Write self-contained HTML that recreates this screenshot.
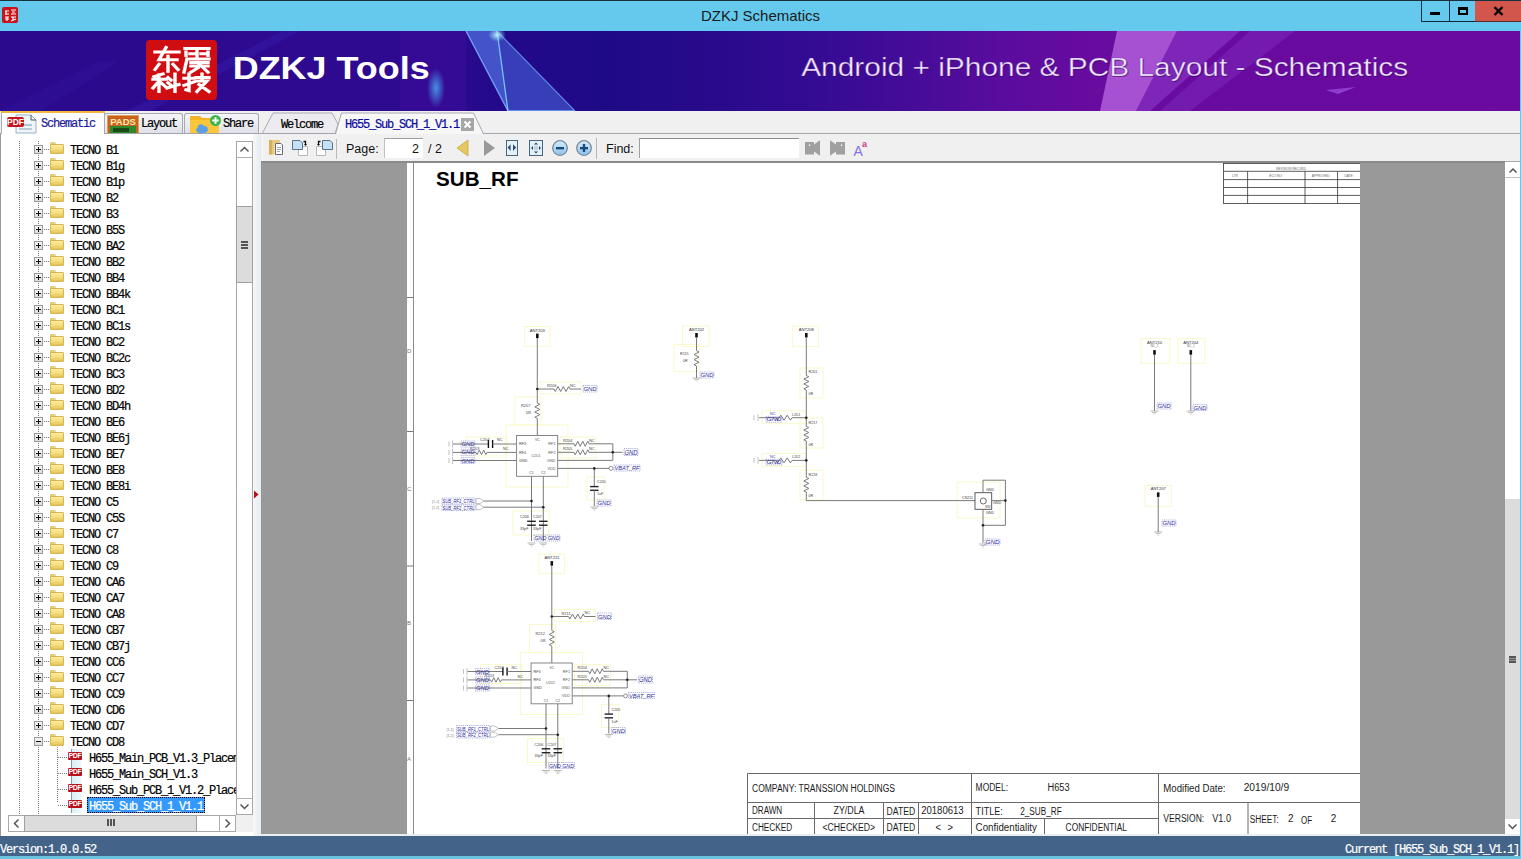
<!DOCTYPE html>
<html><head><meta charset="utf-8"><title>DZKJ Schematics</title>
<style>
*,*::before,*::after{margin:0;padding:0;box-sizing:border-box}
html,body{width:1521px;height:859px;overflow:hidden;background:#f0f0f0;font-family:"Liberation Sans",sans-serif}
.a{position:absolute}
#titlebar{left:0;top:0;width:1521px;height:31px;background:#64c9ec;border-top:1px solid #17323c}
#title{left:0;top:1px;width:1521px;text-align:center;font-size:15px;line-height:29px;color:#1c1c1c}
#banner{left:0;top:31px;width:1520px;height:80px;overflow:hidden;background:linear-gradient(90deg,#2a0a8a 0%,#2d0b8e 30%,#310b92 48%,#3a0c98 55%,#520c9e 66%,#650c9e 76%,#6a0a9c 100%)}
#bright{left:1520px;top:31px;width:1px;height:828px;background:#6cc6e4}
.mono{font-family:"Liberation Mono",monospace;font-size:12px;letter-spacing:-1.2px;white-space:pre;-webkit-text-stroke:0.2px currentColor}
#tabrow{left:0;top:111px;width:1520px;height:23px;background:#f0f0f0}
#leftpanel{left:0;top:134px;width:261px;height:702px;background:#fff;border-left:1px solid #9a9a9a}
#lstrip{left:253px;top:134px;width:8px;height:702px;background:linear-gradient(90deg,#f6f8fa,#e6ecf0)}
#splitter{left:261px;top:161px;width:1px;height:673px;background:#959595}
#toolbar{left:262px;top:134px;width:1258px;height:27px;background:#f0f0f0;border-left:1px solid #fafafa}
#viewer{left:262px;top:161px;width:1243px;height:673px;background:#999999;border-top:2px solid #8a8a8a}
#vbelow{left:262px;top:834px;width:1258px;height:2px;background:#e8eef2}
#status{left:0;top:836px;width:1520px;height:20px;background:#436488}
#bottomedge{left:0;top:856px;width:1521px;height:3px;background:#6cc3e0}
.tx{height:16px;line-height:16px;color:#000}
.sel{background:#3399ff;color:#fff;outline:1px dotted #000;outline-offset:-1px;padding:0 2px 0 2px}
.dv{width:1px;background-image:linear-gradient(180deg,#7a7a7a 50%,transparent 50%);background-size:1px 2px}
.dh{height:1px;background-image:linear-gradient(90deg,#7a7a7a 50%,transparent 50%);background-size:2px 1px}
.bx{width:9px;height:9px;border:1px solid #9a9a9a;background:linear-gradient(#f4f4f4,#dcdcdc)}
.bx::before{content:"";position:absolute;left:1px;top:3px;width:5px;height:1px;background:#111}
.pl::after{content:"";position:absolute;left:3px;top:1px;width:1px;height:5px;background:#111}
.fo{width:14px;height:12px}
.fo::before{content:"";position:absolute;left:0;top:0;width:6px;height:3px;background:#e8cf7c;border-radius:1px 2px 0 0}
.fo::after{content:"";position:absolute;left:0;top:2px;width:14px;height:10px;background:linear-gradient(#fbef9e,#f3da78 60%,#e7c05a);border:1px solid #d7b552;border-radius:1px}
.pdfi{width:16px;height:11px}
.pdfi::before{content:"";position:absolute;left:4px;top:-3px;width:10px;height:16px;background:linear-gradient(90deg,#dceef6,#eaf8fa);border-left:1px solid #8a9aa8}
.pdfi span{position:absolute;left:1px;top:0;width:14px;height:8px;background:#b8101a;border-radius:1px;color:#fff;font:bold 7px/8px "Liberation Sans",sans-serif;text-align:center;letter-spacing:-0.3px}
.sb{border:1px solid #a8a8a8;background:#fff}
.thumb{background:#dcdcdc;border:1px solid #a0a0a0}
.tab{height:22px;border:1px solid #a9a9b4;border-bottom:none;border-radius:3px 3px 0 0;background:linear-gradient(#f6f6f9,#dfdfe8)}
.tbtxt{font-size:12px;color:#1a1a1a}
.ic{position:absolute}
</style></head><body>
<div class="a" id="titlebar"></div>
<div class="a" id="title">DZKJ Schematics</div>
<div class="a" style="left:2px;top:7px;width:16px;height:16px;background:#c8141a;border-radius:2px"></div>
<svg class="a" style="left:2px;top:7px" width="16" height="16" viewBox="0 0 16 16" stroke="#fff" stroke-width="1.2" fill="none"><path d="M3 4H7M4 4V8M3 7H7M9 3H14M10 5H13M9 7H14M3 10H7M5 10V14M3 12H7M9 10H14M11 10V14M9 14L14 12"/></svg>
<div class="a" style="left:1421px;top:1px;width:55px;height:21px;border:1px solid #0f2a36;border-top:none"></div>
<div class="a" style="left:1449px;top:1px;width:1px;height:21px;background:#0f2a36"></div>
<div class="a" style="left:1475px;top:1px;width:46px;height:21px;background:#d2564b;border-bottom:1px solid #5a2a24"></div>
<div class="a" style="left:1430px;top:12px;width:10px;height:3px;background:#000"></div>
<div class="a" style="left:1458px;top:7px;width:10px;height:8px;border:2px solid #000;border-top-width:3px"></div>
<svg class="a" style="left:1493px;top:6px" width="11" height="10" viewBox="0 0 11 10"><path d="M1.5 1 L9.5 9 M9.5 1 L1.5 9" stroke="#000" stroke-width="2.4"/></svg>

<div class="a" id="banner">
<svg class="a" style="left:0;top:0" width="1520" height="80" viewBox="0 0 1520 80" font-family="Liberation Sans">
<defs>
<linearGradient id="bg" x1="0" y1="0" x2="1520" y2="0" gradientUnits="userSpaceOnUse">
<stop offset="0" stop-color="#2b0a8d"/><stop offset="0.29" stop-color="#2e0a90"/><stop offset="0.33" stop-color="#22098a"/>
<stop offset="0.40" stop-color="#1f0a86"/><stop offset="0.46" stop-color="#270a8a"/><stop offset="0.53" stop-color="#330b92"/>
<stop offset="0.60" stop-color="#450c98"/><stop offset="0.66" stop-color="#5a0c9e"/><stop offset="0.72" stop-color="#680b9f"/>
<stop offset="1" stop-color="#6b0a9e"/></linearGradient>
<radialGradient id="glow" cx="0.5" cy="0.5" r="0.5"><stop offset="0" stop-color="#4aa8f0" stop-opacity=".85"/><stop offset="1" stop-color="#4aa8f0" stop-opacity="0"/></radialGradient>
<radialGradient id="glow2" cx="0.5" cy="0.5" r="0.5"><stop offset="0" stop-color="#c8ffff" stop-opacity=".9"/><stop offset="1" stop-color="#80e0ff" stop-opacity="0"/></radialGradient>
</defs>
<rect width="1520" height="80" fill="url(#bg)"/>
<polygon points="127,80 150,80 300,0 282,0" fill="#4a3ad8" opacity=".18"/>
<polygon points="0,80 40,80 120,30 100,30" fill="#4a3ad8" opacity=".08"/>
<rect x="400" y="0" width="66" height="80" fill="#3b0c9a" opacity=".6"/>
<polygon points="466,0 497,0 575,80 508,80" fill="#4a6ae0" opacity=".55"/>
<polygon points="466,0 497,0 508,80" fill="#5a7ae8" opacity=".35"/>
<polyline points="466,0 508,80 575,80" fill="none" stroke="#7ab0ff" stroke-width="1.3" opacity=".9"/>
<polyline points="497,0 508,80" fill="none" stroke="#80d0ff" stroke-width="1.3" opacity=".9"/>
<polyline points="497,0 575,80" fill="none" stroke="#6a9af0" stroke-width="1.2" opacity=".8"/>
<ellipse cx="497" cy="4" rx="9" ry="7" fill="url(#glow2)"/>
<ellipse cx="436" cy="57" rx="9" ry="20" fill="url(#glow)"/>
<polygon points="1117,0 1177,0 1136,80 1100,80" fill="#c878ec" opacity=".65"/>
<polygon points="1177,0 1240,0 1150,80 1136,80" fill="#9a48d8" opacity=".45"/>
<polygon points="1250,0 1295,0 1190,80 1160,80" fill="#8a38cc" opacity=".35"/>
<polygon points="1326,59 1356,56 1338,63" fill="#a050e0" opacity=".7"/>
<rect x="146" y="9" width="71" height="60" rx="4" fill="#d00e12"/>
<g fill="none" stroke="#fff" stroke-width="3.4" stroke-linecap="square" transform="translate(146 9.5) scale(1 0.88)">
<path d="M9 13 H33 M20 8 L13 22 H31 M22 18 V35 M13 27 L9 33 M27 27 L32 33"/>
<path d="M39 9 H63 M40 13 V17 M62 13 V17 M51 9 V19 M44 15 H48 M55 15 H59 M41 21 H63 M41 21 L38 36 M45 25 H62 M45 29 H62 M52 25 L62 36 M52 31 L45 36"/>
<path d="M17 38 L8 41 M7 44 H20 M13 39 V58 M13 46 L7 54 M14 47 L19 52 M22 42 L25 45 M22 48 L25 51 M21 54 L33 50 M29 38 V58"/>
<path d="M38 43 H48 M43 38 V57 L40 56 M38 51 L48 47 M50 42 H63 M56 38 V46 M51 46 H61 L51 58 M53 50 L63 58"/>
</g>
<text x="232.7" y="48.4" font-size="31" font-weight="bold" fill="#fff" textLength="197" lengthAdjust="spacingAndGlyphs">DZKJ Tools</text>
<text x="802.2" y="45.7" font-size="25" fill="#3a0050" opacity=".45" textLength="607" lengthAdjust="spacingAndGlyphs">Android + iPhone &amp; PCB Layout - Schematics</text>
<text x="801.2" y="44.7" font-size="25" fill="#f6eefc" stroke="#5010a0" stroke-opacity=".55" stroke-width=".7" paint-order="normal" textLength="607" lengthAdjust="spacingAndGlyphs">Android + iPhone &amp; PCB Layout - Schematics</text>
</svg>
</div>
<div class="a" id="tabrow"></div>
<div class="a" style="left:0;top:133px;width:1520px;height:1px;background:#a4a4ac"></div>
<div class="a" style="left:1px;top:111px;width:104px;height:24px;background:#fff;border:1px solid #a9a9b4;border-bottom:none"></div>
<div class="a" style="left:1px;top:111px;width:104px;height:2px;background:#f0b840"></div>
<div class="a tab" style="left:104px;top:113px;width:79px;height:21px"></div>
<div class="a tab" style="left:184px;top:113px;width:75px;height:21px"></div>
<svg class="a" style="left:5px;top:114px" width="34" height="20" viewBox="0 0 34 20">
<path d="M11 1 H26 L31 6 V19 H11 Z" fill="#eef6fb" stroke="#9ab0c0" stroke-width="1"/>
<path d="M26 1 V6 H31" fill="none" stroke="#555" stroke-width="1"/>
<rect x="14" y="10" width="13" height="2" fill="#a9c9dc"/><rect x="14" y="14" width="13" height="2" fill="#b9ccd8"/>
<rect x="2" y="3" width="17" height="10" rx="2" fill="#c8141c"/>
<text x="10.5" y="11.3" font-family="Liberation Sans" font-weight="bold" font-size="8.5" fill="#fff" text-anchor="middle">PDF</text>
</svg>
<div class="a mono" style="left:41px;top:117px;color:#1c1c9c;line-height:14px">Schematic</div>
<svg class="a" style="left:107px;top:115px" width="32" height="19" viewBox="0 0 32 19">
<rect x="0.5" y="0.5" width="31" height="18" fill="#c8631c" stroke="#e0a060"/>
<text x="16" y="9.5" font-family="Liberation Sans" font-weight="bold" font-size="9.5" fill="#ffe8b0" text-anchor="middle">PADS</text>
<rect x="3" y="11" width="26" height="8" fill="#2c8a2c"/><rect x="6" y="13" width="16" height="4" fill="#1a4a1a"/>
</svg>
<div class="a mono" style="left:141px;top:117px;color:#000;line-height:14px">Layout</div>
<svg class="a" style="left:189px;top:114px" width="34" height="20" viewBox="0 0 34 20">
<path d="M1 2 H11 L13 4 H30 V20 H1 Z" fill="#f6b526"/>
<path d="M1 6 H30 V20 H1Z" fill="#fcc63a"/>
<ellipse cx="13" cy="16" rx="6" ry="3.5" fill="#5aa0e6"/><circle cx="12" cy="13.5" r="3.2" fill="#5aa0e6"/><circle cx="16" cy="14.5" r="2.5" fill="#5aa0e6"/>
<circle cx="26.5" cy="6.5" r="5.5" fill="#3ab54a"/><path d="M26.5 3.2 V9.8 M23.2 6.5 H29.8" stroke="#fff" stroke-width="2"/>
</svg>
<div class="a mono" style="left:223px;top:117px;color:#000;line-height:14px">Share</div>
<svg class="a" style="left:258px;top:111px" width="240" height="24" viewBox="258 111 240 24">
<path d="M262 134 L273 113 H332 L338 124 L335 134" fill="#ececf0" stroke="#a9a9b4" stroke-width="1"/>
<path d="M335.5 134 L341.5 113 H473.5 L483.5 134" fill="#f7f7f7" stroke="#a9a9b4" stroke-width="1"/>
</svg>
<div class="a" style="left:104px;top:133px;width:232px;height:1px;background:#a4a4ac"></div>
<div class="a" style="left:483px;top:133px;width:1037px;height:1px;background:#a4a4ac"></div>
<div class="a mono" style="left:281px;top:118px;color:#000;line-height:14px">Welcome</div>
<div class="a mono" style="left:345px;top:118px;color:#0a0aa0;line-height:14px">H655_Sub_SCH_1_V1.1</div>
<div class="a" style="left:461px;top:118px;width:13px;height:13px;background:#a6a6a6"></div>
<svg class="a" style="left:461px;top:118px" width="13" height="13" viewBox="0 0 13 13"><path d="M3.5 3.5L9.5 9.5M9.5 3.5L3.5 9.5" stroke="#fff" stroke-width="2"/></svg>
<div class="a" id="leftpanel"></div>
<div class="a" id="treeclip" style="left:1px;top:141px;width:235px;height:673px;overflow:hidden">
<div class="a dv" style="left:18px;top:0px;height:673px"></div>
<div class="a dv" style="left:37px;top:0px;height:673px"></div>
<div class="a dv" style="left:56px;top:606px;height:56px"></div>
<div class="a bx pl" style="left:33px;top:4px"></div>
<div class="a dh" style="left:43px;top:8px;width:6px"></div>
<div class="a fo" style="left:49px;top:1px"></div>
<div class="a mono tx" style="left:69px;top:2px">TECNO B1</div>
<div class="a bx pl" style="left:33px;top:20px"></div>
<div class="a dh" style="left:43px;top:24px;width:6px"></div>
<div class="a fo" style="left:49px;top:17px"></div>
<div class="a mono tx" style="left:69px;top:18px">TECNO B1g</div>
<div class="a bx pl" style="left:33px;top:36px"></div>
<div class="a dh" style="left:43px;top:40px;width:6px"></div>
<div class="a fo" style="left:49px;top:33px"></div>
<div class="a mono tx" style="left:69px;top:34px">TECNO B1p</div>
<div class="a bx pl" style="left:33px;top:52px"></div>
<div class="a dh" style="left:43px;top:56px;width:6px"></div>
<div class="a fo" style="left:49px;top:49px"></div>
<div class="a mono tx" style="left:69px;top:50px">TECNO B2</div>
<div class="a bx pl" style="left:33px;top:68px"></div>
<div class="a dh" style="left:43px;top:72px;width:6px"></div>
<div class="a fo" style="left:49px;top:65px"></div>
<div class="a mono tx" style="left:69px;top:66px">TECNO B3</div>
<div class="a bx pl" style="left:33px;top:84px"></div>
<div class="a dh" style="left:43px;top:88px;width:6px"></div>
<div class="a fo" style="left:49px;top:81px"></div>
<div class="a mono tx" style="left:69px;top:82px">TECNO B5S</div>
<div class="a bx pl" style="left:33px;top:100px"></div>
<div class="a dh" style="left:43px;top:104px;width:6px"></div>
<div class="a fo" style="left:49px;top:97px"></div>
<div class="a mono tx" style="left:69px;top:98px">TECNO BA2</div>
<div class="a bx pl" style="left:33px;top:116px"></div>
<div class="a dh" style="left:43px;top:120px;width:6px"></div>
<div class="a fo" style="left:49px;top:113px"></div>
<div class="a mono tx" style="left:69px;top:114px">TECNO BB2</div>
<div class="a bx pl" style="left:33px;top:132px"></div>
<div class="a dh" style="left:43px;top:136px;width:6px"></div>
<div class="a fo" style="left:49px;top:129px"></div>
<div class="a mono tx" style="left:69px;top:130px">TECNO BB4</div>
<div class="a bx pl" style="left:33px;top:148px"></div>
<div class="a dh" style="left:43px;top:152px;width:6px"></div>
<div class="a fo" style="left:49px;top:145px"></div>
<div class="a mono tx" style="left:69px;top:146px">TECNO BB4k</div>
<div class="a bx pl" style="left:33px;top:164px"></div>
<div class="a dh" style="left:43px;top:168px;width:6px"></div>
<div class="a fo" style="left:49px;top:161px"></div>
<div class="a mono tx" style="left:69px;top:162px">TECNO BC1</div>
<div class="a bx pl" style="left:33px;top:180px"></div>
<div class="a dh" style="left:43px;top:184px;width:6px"></div>
<div class="a fo" style="left:49px;top:177px"></div>
<div class="a mono tx" style="left:69px;top:178px">TECNO BC1s</div>
<div class="a bx pl" style="left:33px;top:196px"></div>
<div class="a dh" style="left:43px;top:200px;width:6px"></div>
<div class="a fo" style="left:49px;top:193px"></div>
<div class="a mono tx" style="left:69px;top:194px">TECNO BC2</div>
<div class="a bx pl" style="left:33px;top:212px"></div>
<div class="a dh" style="left:43px;top:216px;width:6px"></div>
<div class="a fo" style="left:49px;top:209px"></div>
<div class="a mono tx" style="left:69px;top:210px">TECNO BC2c</div>
<div class="a bx pl" style="left:33px;top:228px"></div>
<div class="a dh" style="left:43px;top:232px;width:6px"></div>
<div class="a fo" style="left:49px;top:225px"></div>
<div class="a mono tx" style="left:69px;top:226px">TECNO BC3</div>
<div class="a bx pl" style="left:33px;top:244px"></div>
<div class="a dh" style="left:43px;top:248px;width:6px"></div>
<div class="a fo" style="left:49px;top:241px"></div>
<div class="a mono tx" style="left:69px;top:242px">TECNO BD2</div>
<div class="a bx pl" style="left:33px;top:260px"></div>
<div class="a dh" style="left:43px;top:264px;width:6px"></div>
<div class="a fo" style="left:49px;top:257px"></div>
<div class="a mono tx" style="left:69px;top:258px">TECNO BD4h</div>
<div class="a bx pl" style="left:33px;top:276px"></div>
<div class="a dh" style="left:43px;top:280px;width:6px"></div>
<div class="a fo" style="left:49px;top:273px"></div>
<div class="a mono tx" style="left:69px;top:274px">TECNO BE6</div>
<div class="a bx pl" style="left:33px;top:292px"></div>
<div class="a dh" style="left:43px;top:296px;width:6px"></div>
<div class="a fo" style="left:49px;top:289px"></div>
<div class="a mono tx" style="left:69px;top:290px">TECNO BE6j</div>
<div class="a bx pl" style="left:33px;top:308px"></div>
<div class="a dh" style="left:43px;top:312px;width:6px"></div>
<div class="a fo" style="left:49px;top:305px"></div>
<div class="a mono tx" style="left:69px;top:306px">TECNO BE7</div>
<div class="a bx pl" style="left:33px;top:324px"></div>
<div class="a dh" style="left:43px;top:328px;width:6px"></div>
<div class="a fo" style="left:49px;top:321px"></div>
<div class="a mono tx" style="left:69px;top:322px">TECNO BE8</div>
<div class="a bx pl" style="left:33px;top:340px"></div>
<div class="a dh" style="left:43px;top:344px;width:6px"></div>
<div class="a fo" style="left:49px;top:337px"></div>
<div class="a mono tx" style="left:69px;top:338px">TECNO BE8i</div>
<div class="a bx pl" style="left:33px;top:356px"></div>
<div class="a dh" style="left:43px;top:360px;width:6px"></div>
<div class="a fo" style="left:49px;top:353px"></div>
<div class="a mono tx" style="left:69px;top:354px">TECNO C5</div>
<div class="a bx pl" style="left:33px;top:372px"></div>
<div class="a dh" style="left:43px;top:376px;width:6px"></div>
<div class="a fo" style="left:49px;top:369px"></div>
<div class="a mono tx" style="left:69px;top:370px">TECNO C5S</div>
<div class="a bx pl" style="left:33px;top:388px"></div>
<div class="a dh" style="left:43px;top:392px;width:6px"></div>
<div class="a fo" style="left:49px;top:385px"></div>
<div class="a mono tx" style="left:69px;top:386px">TECNO C7</div>
<div class="a bx pl" style="left:33px;top:404px"></div>
<div class="a dh" style="left:43px;top:408px;width:6px"></div>
<div class="a fo" style="left:49px;top:401px"></div>
<div class="a mono tx" style="left:69px;top:402px">TECNO C8</div>
<div class="a bx pl" style="left:33px;top:420px"></div>
<div class="a dh" style="left:43px;top:424px;width:6px"></div>
<div class="a fo" style="left:49px;top:417px"></div>
<div class="a mono tx" style="left:69px;top:418px">TECNO C9</div>
<div class="a bx pl" style="left:33px;top:436px"></div>
<div class="a dh" style="left:43px;top:440px;width:6px"></div>
<div class="a fo" style="left:49px;top:433px"></div>
<div class="a mono tx" style="left:69px;top:434px">TECNO CA6</div>
<div class="a bx pl" style="left:33px;top:452px"></div>
<div class="a dh" style="left:43px;top:456px;width:6px"></div>
<div class="a fo" style="left:49px;top:449px"></div>
<div class="a mono tx" style="left:69px;top:450px">TECNO CA7</div>
<div class="a bx pl" style="left:33px;top:468px"></div>
<div class="a dh" style="left:43px;top:472px;width:6px"></div>
<div class="a fo" style="left:49px;top:465px"></div>
<div class="a mono tx" style="left:69px;top:466px">TECNO CA8</div>
<div class="a bx pl" style="left:33px;top:484px"></div>
<div class="a dh" style="left:43px;top:488px;width:6px"></div>
<div class="a fo" style="left:49px;top:481px"></div>
<div class="a mono tx" style="left:69px;top:482px">TECNO CB7</div>
<div class="a bx pl" style="left:33px;top:500px"></div>
<div class="a dh" style="left:43px;top:504px;width:6px"></div>
<div class="a fo" style="left:49px;top:497px"></div>
<div class="a mono tx" style="left:69px;top:498px">TECNO CB7j</div>
<div class="a bx pl" style="left:33px;top:516px"></div>
<div class="a dh" style="left:43px;top:520px;width:6px"></div>
<div class="a fo" style="left:49px;top:513px"></div>
<div class="a mono tx" style="left:69px;top:514px">TECNO CC6</div>
<div class="a bx pl" style="left:33px;top:532px"></div>
<div class="a dh" style="left:43px;top:536px;width:6px"></div>
<div class="a fo" style="left:49px;top:529px"></div>
<div class="a mono tx" style="left:69px;top:530px">TECNO CC7</div>
<div class="a bx pl" style="left:33px;top:548px"></div>
<div class="a dh" style="left:43px;top:552px;width:6px"></div>
<div class="a fo" style="left:49px;top:545px"></div>
<div class="a mono tx" style="left:69px;top:546px">TECNO CC9</div>
<div class="a bx pl" style="left:33px;top:564px"></div>
<div class="a dh" style="left:43px;top:568px;width:6px"></div>
<div class="a fo" style="left:49px;top:561px"></div>
<div class="a mono tx" style="left:69px;top:562px">TECNO CD6</div>
<div class="a bx pl" style="left:33px;top:580px"></div>
<div class="a dh" style="left:43px;top:584px;width:6px"></div>
<div class="a fo" style="left:49px;top:577px"></div>
<div class="a mono tx" style="left:69px;top:578px">TECNO CD7</div>
<div class="a bx mn" style="left:33px;top:596px"></div>
<div class="a dh" style="left:43px;top:600px;width:6px"></div>
<div class="a fo" style="left:49px;top:593px"></div>
<div class="a mono tx" style="left:69px;top:594px">TECNO CD8</div>
<div class="a dh" style="left:57px;top:616px;width:10px"></div>
<div class="a pdfi" style="left:66px;top:611px"><span>PDF</span></div>
<div class="a mono tx" style="left:88px;top:610px">H655_Main_PCB_V1.3_Placement</div>
<div class="a dh" style="left:57px;top:632px;width:10px"></div>
<div class="a pdfi" style="left:66px;top:627px"><span>PDF</span></div>
<div class="a mono tx" style="left:88px;top:626px">H655_Main_SCH_V1.3</div>
<div class="a dh" style="left:57px;top:648px;width:10px"></div>
<div class="a pdfi" style="left:66px;top:643px"><span>PDF</span></div>
<div class="a mono tx" style="left:88px;top:642px">H655_Sub_PCB_1_V1.2_Placement</div>
<div class="a dh" style="left:57px;top:664px;width:10px"></div>
<div class="a pdfi" style="left:66px;top:659px"><span>PDF</span></div>
<div class="a mono tx sel" style="left:86px;top:656px;line-height:20px">H655_Sub_SCH_1_V1.1</div>
</div>
<div class="a" id="lstrip"></div>
<div class="a" id="splitter"></div>
<svg class="a" style="left:253px;top:490px" width="7" height="9" viewBox="0 0 7 9"><path d="M1 0.5 L5.5 4.5 L1 8.5Z" fill="#b01018"/></svg>
<div class="a sb" style="left:236px;top:141px;width:17px;height:674px"></div>
<div class="a" style="left:237px;top:157px;width:15px;height:1px;background:#b0b0b0"></div>
<div class="a" style="left:237px;top:798px;width:15px;height:1px;background:#b0b0b0"></div>
<div class="a thumb" style="left:236px;top:206px;width:17px;height:77px"></div>
<div class="a" style="left:241px;top:241px;width:7px;height:2px;background:#555;box-shadow:0 3px 0 #555,0 6px 0 #555"></div>
<svg class="a" style="left:236px;top:141px" width="17" height="17"><path d="M4.5 10.5 L8.5 6.5 L12.5 10.5" fill="none" stroke="#555" stroke-width="1.5"/></svg>
<svg class="a" style="left:236px;top:798px" width="17" height="17"><path d="M4.5 6.5 L8.5 10.5 L12.5 6.5" fill="none" stroke="#555" stroke-width="1.5"/></svg>
<div class="a sb" style="left:8px;top:815px;width:228px;height:17px"></div>
<div class="a" style="left:24px;top:816px;width:1px;height:15px;background:#b0b0b0"></div>
<div class="a" style="left:219px;top:816px;width:1px;height:15px;background:#b0b0b0"></div>
<div class="a thumb" style="left:24px;top:815px;width:173px;height:17px"></div>
<div class="a" style="left:107px;top:819px;width:2px;height:7px;background:#555;box-shadow:3px 0 0 #555,6px 0 0 #555"></div>
<svg class="a" style="left:8px;top:815px" width="17" height="17"><path d="M10.5 4.5 L6.5 8.5 L10.5 12.5" fill="none" stroke="#555" stroke-width="1.5"/></svg>
<svg class="a" style="left:219px;top:815px" width="17" height="17"><path d="M6.5 4.5 L10.5 8.5 L6.5 12.5" fill="none" stroke="#555" stroke-width="1.5"/></svg>
<div class="a" style="left:236px;top:815px;width:17px;height:17px;background:#f0f0f0"></div>
<div class="a" style="left:1505px;top:161px;width:15px;height:673px;background:#fff;border-top:1px solid #a8a8a8"></div>
<div class="a" style="left:1505px;top:177px;width:15px;height:1px;background:#c0c0c0"></div>
<div class="a" style="left:1505px;top:499px;width:15px;height:320px;background:#dcdcdc"></div>
<div class="a" style="left:1509px;top:656px;width:7px;height:1.5px;background:#555;box-shadow:0 2.5px 0 #555,0 5px 0 #555"></div>
<svg class="a" style="left:1505px;top:162px" width="15" height="16"><path d="M4.5 10.5 L8 7 L11.5 10.5" fill="none" stroke="#555" stroke-width="1.5"/></svg>
<div class="a" style="left:1505px;top:819px;width:15px;height:15px;background:#fff"></div>
<svg class="a" style="left:1505px;top:819px" width="15" height="15"><path d="M3.5 5.5 L7.5 9.5 L11.5 5.5" fill="none" stroke="#555" stroke-width="1.5"/></svg>
<div class="a" id="toolbar"></div>
<svg class="a" style="left:262px;top:134px" width="620" height="27" viewBox="262 134 620 27">
<!-- open icon -->
<path d="M269 140 H280 V143 H274.5 V154.5 H269Z" fill="#e9c878"/>
<rect x="269" y="140" width="3" height="14.5" fill="#d8b058"/>
<path d="M275.5 143.5 H281 L282.5 145 V154.5 H275.5Z" fill="#fff" stroke="#6a6a7a" stroke-width="1"/>
<path d="M277 147.5H281M277 149.5H281M277 151.5H280" stroke="#9aaab8" stroke-width="1"/>
<!-- rotate icons -->
<path d="M298.5 146.5 H307.5 V155.5 H298.5Z" fill="#fff" stroke="#b8b8b8" stroke-width="1"/>
<path d="M292.5 140.5 H300 L302.5 143 V149.5 H292.5Z" fill="#c6e0f4" stroke="#5a7088" stroke-width="1"/>
<path d="M303.5 141.5 H305.5 V144.5" fill="none" stroke="#111" stroke-width="1.3"/><path d="M304 144 L307 144 L305.5 146Z" fill="#111"/>
<path d="M316.5 146.5 H325.5 V155.5 H316.5Z" fill="#fff" stroke="#b8b8b8" stroke-width="1"/>
<path d="M322.5 140.5 H330 L332.5 143 V149.5 H322.5Z" fill="#c6e0f4" stroke="#5a7088" stroke-width="1"/>
<path d="M320.5 141.5 H318.5 V144.5" fill="none" stroke="#111" stroke-width="1.3"/><path d="M317 144 L320 144 L318.5 146Z" fill="#111"/>
<line x1="336.5" y1="139" x2="336.5" y2="159" stroke="#b8b8b8"/>
<!-- prev/next -->
<path d="M468 140 L457 148 L468 156Z" fill="#e6c860" stroke="#c9a840" stroke-width=".8"/>
<path d="M484 140 L495 148 L484 156Z" fill="#9a9a9a"/>
<!-- fit width -->
<rect x="506.5" y="140.5" width="11" height="15" fill="#e2f0fa" stroke="#4a6480"/>
<path d="M510.6 144.3 L507.6 147.6 L510.6 151Z M513 144.3 L516.2 147.6 L513 151Z" fill="#2a4a6a"/>
<!-- fit page -->
<rect x="529.5" y="140.5" width="13" height="15" fill="#e2f0fa" stroke="#4a6480"/>
<circle cx="536" cy="148" r="2.5" fill="#c8d4dc"/>
<path d="M536 142.5 L534 144.5 H538Z M536 153.5 L534 151.5 H538Z M531 148 L533 146 V150Z M541 148 L539 146 V150Z" fill="#2a4a6a"/>
<!-- zoom out -->
<defs><linearGradient id="zg" x1="0" y1="0" x2="0" y2="1"><stop offset="0" stop-color="#d8ecfa"/><stop offset="1" stop-color="#8cc4ee"/></linearGradient></defs>
<circle cx="560" cy="148" r="7.3" fill="url(#zg)" stroke="#7a8a98" stroke-width="1.3"/>
<rect x="556" y="147" width="8" height="2.4" fill="#1a4a78"/>
<circle cx="584" cy="148" r="7.3" fill="url(#zg)" stroke="#7a8a98" stroke-width="1.3"/>
<rect x="580" y="147" width="8" height="2.4" fill="#1a4a78"/><rect x="582.8" y="144" width="2.4" height="8" fill="#1a4a78"/>
<line x1="596.5" y1="138" x2="596.5" y2="159" stroke="#b8b8b8"/>
<!-- find prev/next -->
<path d="M805 142 H814 V154.5 H805Z" fill="#a0a0a0"/><path d="M820 140.3 V155.8 L809 148Z" fill="#a0a0a0"/><path d="M809.5 143.5 L810.5 146 L808.5 146Z" fill="#e8e8e8"/>
<path d="M836 142 H845 V154.5 H836Z" fill="#a0a0a0"/><path d="M830 140.3 V155.8 L841 148Z" fill="#a0a0a0"/><path d="M841.5 143.5 L842.5 146 L840.5 146Z" fill="#e8e8e8"/>
<text x="853.5" y="155.5" font-family="Liberation Sans" font-size="14" fill="#8a70e6">A</text>
<text x="862" y="147" font-family="Liberation Sans" font-weight="bold" font-size="9" fill="#d03a8a">a</text>
</svg>
<div class="a" style="left:346px;top:141px;font-size:12.5px;line-height:16px;color:#111">Page:</div>
<div class="a" style="left:384px;top:138px;width:39px;height:20px;background:#fff;border-top:1px solid #a0a0a0;border-left:1px solid #c0c0c0"></div>
<div class="a" style="left:412px;top:141px;font-size:12.5px;line-height:16px;color:#111">2</div>
<div class="a" style="left:428px;top:141px;font-size:12.5px;line-height:16px;color:#111">/ 2</div>
<div class="a" style="left:606px;top:141px;font-size:12.5px;line-height:16px;color:#111">Find:</div>
<div class="a" style="left:639px;top:138px;width:160px;height:20px;background:#fff;border-top:1px solid #8c8c8c;border-left:1px solid #a0a0a0"></div>
<div class="a" id="viewer"></div>
<div class="a" style="left:407px;top:163px;width:953px;height:671px;background:#fff"></div>
<svg class="a" style="left:407px;top:163px" width="953" height="671" viewBox="407 163 953 671" font-family="Liberation Sans">
<line x1="413.5" y1="163" x2="413.5" y2="834" stroke="#8a8a8a" stroke-width="1"/>
<line x1="407" y1="297.5" x2="413" y2="297.5" stroke="#777" stroke-width="1"/>
<line x1="407" y1="431.5" x2="413" y2="431.5" stroke="#777" stroke-width="1"/>
<line x1="407" y1="566" x2="413" y2="566" stroke="#777" stroke-width="1"/>
<line x1="407" y1="700.5" x2="413" y2="700.5" stroke="#777" stroke-width="1"/>
<text x="407" y="353" font-size="6" fill="#777">D</text>
<text x="407" y="491" font-size="6" fill="#777">C</text>
<text x="407" y="625" font-size="6" fill="#777">B</text>
<text x="407" y="761" font-size="6" fill="#777">A</text>
<text x="436" y="185.8" font-size="20.8" font-weight="bold" fill="#000" textLength="82.5" lengthAdjust="spacingAndGlyphs">SUB_RF</text>
<g stroke="#333" stroke-width=".8" fill="none">
<rect x="1223.5" y="163.5" width="137" height="40"/>
<line x1="1223.5" y1="171.3" x2="1360" y2="171.3"/>
<line x1="1223.5" y1="179.6" x2="1360" y2="179.6"/>
<line x1="1223.5" y1="187.5" x2="1360" y2="187.5"/>
<line x1="1223.5" y1="195.4" x2="1360" y2="195.4"/>
<line x1="1247.6" y1="171.3" x2="1247.6" y2="203.5"/>
<line x1="1305" y1="171.3" x2="1305" y2="203.5"/>
<line x1="1337.6" y1="171.3" x2="1337.6" y2="203.5"/>
</g>
<g font-size="3.2" fill="#666" text-anchor="middle"><text x="1291" y="169.5">REVISION RECORD</text><text x="1235" y="177">LTR</text><text x="1276" y="177">ECO NO:</text><text x="1321" y="177">APPROVED:</text><text x="1349" y="177">DATE:</text></g>
<g><rect x="524.4" y="326.6" width="25.6" height="19.6" fill="none" stroke="#f9f9cc" stroke-width="1"/><rect x="540.0" y="382.0" width="41.0" height="12.0" fill="none" stroke="#f9f9cc" stroke-width="1"/><rect x="515.0" y="397.0" width="26.0" height="28.0" fill="none" stroke="#f9f9cc" stroke-width="1"/><rect x="506.0" y="425.0" width="62.0" height="62.0" fill="none" stroke="#f9f9cc" stroke-width="1"/><rect x="466.0" y="437.0" width="41.0" height="19.0" fill="none" stroke="#f9f9cc" stroke-width="1"/><rect x="560.0" y="437.0" width="36.0" height="21.0" fill="none" stroke="#f9f9cc" stroke-width="1"/><rect x="587.0" y="477.0" width="17.0" height="23.0" fill="none" stroke="#f9f9cc" stroke-width="1"/><rect x="513.0" y="511.0" width="36.0" height="24.0" fill="none" stroke="#f9f9cc" stroke-width="1"/><rect x="538.9" y="554.1" width="25.6" height="19.6" fill="none" stroke="#f9f9cc" stroke-width="1"/><rect x="554.5" y="609.5" width="41.0" height="12.0" fill="none" stroke="#f9f9cc" stroke-width="1"/><rect x="529.5" y="624.5" width="26.0" height="28.0" fill="none" stroke="#f9f9cc" stroke-width="1"/><rect x="520.5" y="652.5" width="62.0" height="62.0" fill="none" stroke="#f9f9cc" stroke-width="1"/><rect x="480.5" y="664.5" width="41.0" height="19.0" fill="none" stroke="#f9f9cc" stroke-width="1"/><rect x="574.5" y="664.5" width="36.0" height="21.0" fill="none" stroke="#f9f9cc" stroke-width="1"/><rect x="601.5" y="704.5" width="17.0" height="23.0" fill="none" stroke="#f9f9cc" stroke-width="1"/><rect x="527.5" y="738.5" width="36.0" height="24.0" fill="none" stroke="#f9f9cc" stroke-width="1"/><rect x="792.4" y="326.0" width="26.2" height="20.4" fill="none" stroke="#f9f9cc" stroke-width="1"/><rect x="800.0" y="368.0" width="23.0" height="30.0" fill="none" stroke="#f9f9cc" stroke-width="1"/><rect x="800.0" y="418.0" width="23.0" height="30.0" fill="none" stroke="#f9f9cc" stroke-width="1"/><rect x="800.0" y="470.0" width="23.0" height="30.0" fill="none" stroke="#f9f9cc" stroke-width="1"/><rect x="762.0" y="410.7" width="44.0" height="13.0" fill="none" stroke="#f9f9cc" stroke-width="1"/><rect x="762.0" y="453.4" width="44.0" height="13.0" fill="none" stroke="#f9f9cc" stroke-width="1"/><rect x="957.0" y="482.0" width="43.0" height="36.0" fill="none" stroke="#f9f9cc" stroke-width="1"/><rect x="1141.0" y="338.6" width="28.9" height="24.7" fill="none" stroke="#f9f9cc" stroke-width="1"/><rect x="1178.0" y="338.6" width="26.8" height="24.7" fill="none" stroke="#f9f9cc" stroke-width="1"/><rect x="1145.0" y="485.4" width="26.3" height="20.9" fill="none" stroke="#f9f9cc" stroke-width="1"/><rect x="682.6" y="326.0" width="26.4" height="20.5" fill="none" stroke="#f9f9cc" stroke-width="1"/><rect x="674.0" y="344.6" width="25.0" height="27.1" fill="none" stroke="#f9f9cc" stroke-width="1"/></g>
<g><line x1="537.3" y1="338.0" x2="537.3" y2="403.0" stroke="#7a7a7a" stroke-width="1"/><polyline points="537.3,403.0 539.8,404.3 534.8,406.9 539.8,409.5 534.8,412.0 539.8,414.6 534.8,417.2 537.3,418.5" fill="none" stroke="#7a7a7a" stroke-width="1"/><line x1="537.3" y1="418.5" x2="537.3" y2="435.5" stroke="#7a7a7a" stroke-width="1"/><line x1="537.3" y1="389.0" x2="554.0" y2="389.0" stroke="#7a7a7a" stroke-width="1"/><polyline points="554.0,389.0 555.3,391.5 558.0,386.5 560.7,391.5 563.3,386.5 566.0,391.5 568.7,386.5 570.0,389.0" fill="none" stroke="#7a7a7a" stroke-width="1"/><line x1="570.0" y1="389.0" x2="581.0" y2="389.0" stroke="#7a7a7a" stroke-width="1"/><rect x="516.6" y="435.5" width="41.1" height="40.8" fill="none" stroke="#7a7a7a" stroke-width="0.9"/><line x1="453.0" y1="444.0" x2="488.4" y2="444.0" stroke="#7a7a7a" stroke-width="1"/><line x1="488.4" y1="440.0" x2="488.4" y2="448.0" stroke="#111" stroke-width="1.4"/><line x1="492.6" y1="440.0" x2="492.6" y2="448.0" stroke="#111" stroke-width="1.4"/><line x1="492.6" y1="444.0" x2="516.6" y2="444.0" stroke="#7a7a7a" stroke-width="1"/><line x1="453.0" y1="452.4" x2="476.0" y2="452.4" stroke="#7a7a7a" stroke-width="1"/><polyline points="476.0,452.4 477.1,454.6 479.3,450.2 481.5,454.6 483.7,450.2 485.9,454.6 487.0,452.4" fill="none" stroke="#7a7a7a" stroke-width="1"/><line x1="487.0" y1="452.4" x2="516.6" y2="452.4" stroke="#7a7a7a" stroke-width="1"/><line x1="453.0" y1="460.5" x2="516.6" y2="460.5" stroke="#7a7a7a" stroke-width="1"/><line x1="449.0" y1="441.5" x2="449.0" y2="446.5" stroke="#999" stroke-width="0.6"/><line x1="452.5" y1="440.5" x2="452.5" y2="447.5" stroke="#999" stroke-width="0.6"/><line x1="449.0" y1="449.9" x2="449.0" y2="454.9" stroke="#999" stroke-width="0.6"/><line x1="452.5" y1="448.9" x2="452.5" y2="455.9" stroke="#999" stroke-width="0.6"/><line x1="449.0" y1="458.0" x2="449.0" y2="463.0" stroke="#999" stroke-width="0.6"/><line x1="452.5" y1="457.0" x2="452.5" y2="464.0" stroke="#999" stroke-width="0.6"/><line x1="557.7" y1="443.8" x2="574.0" y2="443.8" stroke="#7a7a7a" stroke-width="1"/><polyline points="574.0,443.8 575.2,446.3 577.8,441.3 580.2,446.3 582.8,441.3 585.2,446.3 587.8,441.3 589.0,443.8" fill="none" stroke="#7a7a7a" stroke-width="1"/><line x1="589.0" y1="443.8" x2="612.8" y2="443.8" stroke="#7a7a7a" stroke-width="1"/><line x1="557.7" y1="452.3" x2="574.0" y2="452.3" stroke="#7a7a7a" stroke-width="1"/><polyline points="574.0,452.3 575.2,454.8 577.8,449.8 580.2,454.8 582.8,449.8 585.2,454.8 587.8,449.8 589.0,452.3" fill="none" stroke="#7a7a7a" stroke-width="1"/><line x1="589.0" y1="452.3" x2="622.6" y2="452.3" stroke="#7a7a7a" stroke-width="1"/><line x1="557.7" y1="460.4" x2="612.8" y2="460.4" stroke="#7a7a7a" stroke-width="1"/><line x1="612.8" y1="443.8" x2="612.8" y2="460.4" stroke="#7a7a7a" stroke-width="1"/><line x1="557.7" y1="468.4" x2="609.0" y2="468.4" stroke="#7a7a7a" stroke-width="1"/><circle cx="611.0" cy="468.4" r="2" fill="#fff" stroke="#7a7a7a" stroke-width=".8"/><line x1="594.3" y1="468.4" x2="594.3" y2="486.6" stroke="#7a7a7a" stroke-width="1"/><line x1="590.1" y1="486.6" x2="598.5" y2="486.6" stroke="#222" stroke-width="1.4"/><line x1="590.1" y1="490.3" x2="598.5" y2="490.3" stroke="#222" stroke-width="1.4"/><line x1="594.3" y1="490.3" x2="594.3" y2="506.0" stroke="#7a7a7a" stroke-width="1"/><line x1="590.3" y1="507.0" x2="598.3" y2="507.0" stroke="#888" stroke-width="0.6"/><line x1="591.8" y1="508.5" x2="596.8" y2="508.5" stroke="#999" stroke-width="0.6"/><line x1="593.3" y1="510.0" x2="595.3" y2="510.0" stroke="#aaa" stroke-width="0.6"/><line x1="531.5" y1="476.4" x2="531.5" y2="541.0" stroke="#7a7a7a" stroke-width="1"/><line x1="484.0" y1="501.0" x2="531.5" y2="501.0" stroke="#7a7a7a" stroke-width="1"/><polyline points="484.0,501.0 480.0,498.5 476.0,498.5 476.0,503.5 480.0,503.5 484.0,501.0" fill="none" stroke="#999" stroke-width="0.6"/><line x1="527.5" y1="543.0" x2="535.5" y2="543.0" stroke="#888" stroke-width="0.6"/><line x1="529.0" y1="544.5" x2="534.0" y2="544.5" stroke="#999" stroke-width="0.6"/><line x1="530.5" y1="546.0" x2="532.5" y2="546.0" stroke="#aaa" stroke-width="0.6"/><line x1="543.3" y1="476.4" x2="543.3" y2="541.0" stroke="#7a7a7a" stroke-width="1"/><line x1="484.0" y1="507.2" x2="543.3" y2="507.2" stroke="#7a7a7a" stroke-width="1"/><polyline points="484.0,507.2 480.0,504.7 476.0,504.7 476.0,509.7 480.0,509.7 484.0,507.2" fill="none" stroke="#999" stroke-width="0.6"/><line x1="539.3" y1="543.0" x2="547.3" y2="543.0" stroke="#888" stroke-width="0.6"/><line x1="540.8" y1="544.5" x2="545.8" y2="544.5" stroke="#999" stroke-width="0.6"/><line x1="542.3" y1="546.0" x2="544.3" y2="546.0" stroke="#aaa" stroke-width="0.6"/><line x1="527.2" y1="521.3" x2="535.8" y2="521.3" stroke="#222" stroke-width="1.4"/><line x1="527.2" y1="525.2" x2="535.8" y2="525.2" stroke="#222" stroke-width="1.4"/><line x1="539.0" y1="521.3" x2="547.6" y2="521.3" stroke="#222" stroke-width="1.4"/><line x1="539.0" y1="525.2" x2="547.6" y2="525.2" stroke="#222" stroke-width="1.4"/><line x1="551.8" y1="565.5" x2="551.8" y2="630.5" stroke="#7a7a7a" stroke-width="1"/><polyline points="551.8,630.5 554.3,631.8 549.3,634.4 554.3,637.0 549.3,639.5 554.3,642.1 549.3,644.7 551.8,646.0" fill="none" stroke="#7a7a7a" stroke-width="1"/><line x1="551.8" y1="646.0" x2="551.8" y2="663.0" stroke="#7a7a7a" stroke-width="1"/><line x1="551.8" y1="616.5" x2="568.5" y2="616.5" stroke="#7a7a7a" stroke-width="1"/><polyline points="568.5,616.5 569.8,619.0 572.5,614.0 575.2,619.0 577.8,614.0 580.5,619.0 583.2,614.0 584.5,616.5" fill="none" stroke="#7a7a7a" stroke-width="1"/><line x1="584.5" y1="616.5" x2="595.5" y2="616.5" stroke="#7a7a7a" stroke-width="1"/><rect x="531.1" y="663.0" width="41.1" height="40.8" fill="none" stroke="#7a7a7a" stroke-width="0.9"/><line x1="467.5" y1="671.5" x2="502.9" y2="671.5" stroke="#7a7a7a" stroke-width="1"/><line x1="502.9" y1="667.5" x2="502.9" y2="675.5" stroke="#111" stroke-width="1.4"/><line x1="507.1" y1="667.5" x2="507.1" y2="675.5" stroke="#111" stroke-width="1.4"/><line x1="507.1" y1="671.5" x2="531.1" y2="671.5" stroke="#7a7a7a" stroke-width="1"/><line x1="467.5" y1="679.9" x2="490.5" y2="679.9" stroke="#7a7a7a" stroke-width="1"/><polyline points="490.5,679.9 491.6,682.1 493.8,677.7 496.0,682.1 498.2,677.7 500.4,682.1 501.5,679.9" fill="none" stroke="#7a7a7a" stroke-width="1"/><line x1="501.5" y1="679.9" x2="531.1" y2="679.9" stroke="#7a7a7a" stroke-width="1"/><line x1="467.5" y1="688.0" x2="531.1" y2="688.0" stroke="#7a7a7a" stroke-width="1"/><line x1="463.5" y1="669.0" x2="463.5" y2="674.0" stroke="#999" stroke-width="0.6"/><line x1="467.0" y1="668.0" x2="467.0" y2="675.0" stroke="#999" stroke-width="0.6"/><line x1="463.5" y1="677.4" x2="463.5" y2="682.4" stroke="#999" stroke-width="0.6"/><line x1="467.0" y1="676.4" x2="467.0" y2="683.4" stroke="#999" stroke-width="0.6"/><line x1="463.5" y1="685.5" x2="463.5" y2="690.5" stroke="#999" stroke-width="0.6"/><line x1="467.0" y1="684.5" x2="467.0" y2="691.5" stroke="#999" stroke-width="0.6"/><line x1="572.2" y1="671.3" x2="588.5" y2="671.3" stroke="#7a7a7a" stroke-width="1"/><polyline points="588.5,671.3 589.8,673.8 592.2,668.8 594.8,673.8 597.2,668.8 599.8,673.8 602.2,668.8 603.5,671.3" fill="none" stroke="#7a7a7a" stroke-width="1"/><line x1="603.5" y1="671.3" x2="627.3" y2="671.3" stroke="#7a7a7a" stroke-width="1"/><line x1="572.2" y1="679.8" x2="588.5" y2="679.8" stroke="#7a7a7a" stroke-width="1"/><polyline points="588.5,679.8 589.8,682.3 592.2,677.3 594.8,682.3 597.2,677.3 599.8,682.3 602.2,677.3 603.5,679.8" fill="none" stroke="#7a7a7a" stroke-width="1"/><line x1="603.5" y1="679.8" x2="637.1" y2="679.8" stroke="#7a7a7a" stroke-width="1"/><line x1="572.2" y1="687.9" x2="627.3" y2="687.9" stroke="#7a7a7a" stroke-width="1"/><line x1="627.3" y1="671.3" x2="627.3" y2="687.9" stroke="#7a7a7a" stroke-width="1"/><line x1="572.2" y1="695.9" x2="623.5" y2="695.9" stroke="#7a7a7a" stroke-width="1"/><circle cx="625.5" cy="695.9" r="2" fill="#fff" stroke="#7a7a7a" stroke-width=".8"/><line x1="608.8" y1="695.9" x2="608.8" y2="714.1" stroke="#7a7a7a" stroke-width="1"/><line x1="604.6" y1="714.1" x2="613.0" y2="714.1" stroke="#222" stroke-width="1.4"/><line x1="604.6" y1="717.8" x2="613.0" y2="717.8" stroke="#222" stroke-width="1.4"/><line x1="608.8" y1="717.8" x2="608.8" y2="733.5" stroke="#7a7a7a" stroke-width="1"/><line x1="604.8" y1="734.5" x2="612.8" y2="734.5" stroke="#888" stroke-width="0.6"/><line x1="606.3" y1="736.0" x2="611.3" y2="736.0" stroke="#999" stroke-width="0.6"/><line x1="607.8" y1="737.5" x2="609.8" y2="737.5" stroke="#aaa" stroke-width="0.6"/><line x1="546.0" y1="703.9" x2="546.0" y2="768.5" stroke="#7a7a7a" stroke-width="1"/><line x1="498.5" y1="728.5" x2="546.0" y2="728.5" stroke="#7a7a7a" stroke-width="1"/><polyline points="498.5,728.5 494.5,726.0 490.5,726.0 490.5,731.0 494.5,731.0 498.5,728.5" fill="none" stroke="#999" stroke-width="0.6"/><line x1="542.0" y1="770.5" x2="550.0" y2="770.5" stroke="#888" stroke-width="0.6"/><line x1="543.5" y1="772.0" x2="548.5" y2="772.0" stroke="#999" stroke-width="0.6"/><line x1="545.0" y1="773.5" x2="547.0" y2="773.5" stroke="#aaa" stroke-width="0.6"/><line x1="557.8" y1="703.9" x2="557.8" y2="768.5" stroke="#7a7a7a" stroke-width="1"/><line x1="498.5" y1="734.7" x2="557.8" y2="734.7" stroke="#7a7a7a" stroke-width="1"/><polyline points="498.5,734.7 494.5,732.2 490.5,732.2 490.5,737.2 494.5,737.2 498.5,734.7" fill="none" stroke="#999" stroke-width="0.6"/><line x1="553.8" y1="770.5" x2="561.8" y2="770.5" stroke="#888" stroke-width="0.6"/><line x1="555.3" y1="772.0" x2="560.3" y2="772.0" stroke="#999" stroke-width="0.6"/><line x1="556.8" y1="773.5" x2="558.8" y2="773.5" stroke="#aaa" stroke-width="0.6"/><line x1="541.7" y1="748.8" x2="550.3" y2="748.8" stroke="#222" stroke-width="1.4"/><line x1="541.7" y1="752.7" x2="550.3" y2="752.7" stroke="#222" stroke-width="1.4"/><line x1="553.5" y1="748.8" x2="562.1" y2="748.8" stroke="#222" stroke-width="1.4"/><line x1="553.5" y1="752.7" x2="562.1" y2="752.7" stroke="#222" stroke-width="1.4"/><line x1="806.3" y1="338.0" x2="806.3" y2="375.5" stroke="#7a7a7a" stroke-width="1"/><polyline points="806.3,375.5 808.8,376.7 803.8,379.1 808.8,381.5 803.8,384.0 808.8,386.4 803.8,388.8 806.3,390.0" fill="none" stroke="#7a7a7a" stroke-width="1"/><line x1="806.3" y1="390.0" x2="806.3" y2="426.4" stroke="#7a7a7a" stroke-width="1"/><polyline points="806.3,426.4 808.8,427.6 803.8,430.0 808.8,432.5 803.8,434.9 808.8,437.4 803.8,439.8 806.3,441.0" fill="none" stroke="#7a7a7a" stroke-width="1"/><line x1="806.3" y1="441.0" x2="806.3" y2="477.3" stroke="#7a7a7a" stroke-width="1"/><polyline points="806.3,477.3 808.8,478.5 803.8,481.0 808.8,483.4 803.8,485.9 808.8,488.3 803.8,490.8 806.3,492.0" fill="none" stroke="#7a7a7a" stroke-width="1"/><line x1="806.3" y1="492.0" x2="806.3" y2="500.6" stroke="#7a7a7a" stroke-width="1"/><line x1="759.0" y1="417.7" x2="776.0" y2="417.7" stroke="#7a7a7a" stroke-width="1"/><polyline points="776.0,417.7 777.6,420.2 780.8,415.2 784.0,420.2 787.2,415.2 790.4,420.2 792.0,417.7" fill="none" stroke="#7a7a7a" stroke-width="1"/><line x1="792.0" y1="417.7" x2="806.3" y2="417.7" stroke="#7a7a7a" stroke-width="1"/><line x1="754.0" y1="415.2" x2="754.0" y2="420.2" stroke="#999" stroke-width="0.6"/><line x1="758.0" y1="414.2" x2="758.0" y2="421.2" stroke="#999" stroke-width="0.6"/><line x1="759.0" y1="460.4" x2="776.0" y2="460.4" stroke="#7a7a7a" stroke-width="1"/><polyline points="776.0,460.4 777.6,462.9 780.8,457.9 784.0,462.9 787.2,457.9 790.4,462.9 792.0,460.4" fill="none" stroke="#7a7a7a" stroke-width="1"/><line x1="792.0" y1="460.4" x2="806.3" y2="460.4" stroke="#7a7a7a" stroke-width="1"/><line x1="754.0" y1="457.9" x2="754.0" y2="462.9" stroke="#999" stroke-width="0.6"/><line x1="758.0" y1="456.9" x2="758.0" y2="463.9" stroke="#999" stroke-width="0.6"/><line x1="806.3" y1="500.6" x2="975.0" y2="500.6" stroke="#7a7a7a" stroke-width="1"/><rect x="975" y="492.7" width="16.7" height="16.6" fill="none" stroke="#4a4a4a" stroke-width=".9"/><circle cx="983.3" cy="501" r="3" fill="none" stroke="#4a4a4a" stroke-width=".8"/><polyline points="983.0,492.7 983.0,480.2 1005.4,480.2 1005.4,525.3 983.0,525.3" fill="none" stroke="#7a7a7a" stroke-width="1"/><line x1="983.0" y1="509.3" x2="983.0" y2="542.8" stroke="#7a7a7a" stroke-width="1"/><line x1="991.7" y1="500.6" x2="1005.4" y2="500.6" stroke="#7a7a7a" stroke-width="1"/><line x1="979.0" y1="544.0" x2="987.0" y2="544.0" stroke="#888" stroke-width="0.6"/><line x1="980.5" y1="545.5" x2="985.5" y2="545.5" stroke="#999" stroke-width="0.6"/><line x1="982.0" y1="547.0" x2="984.0" y2="547.0" stroke="#aaa" stroke-width="0.6"/><line x1="1154.5" y1="352.0" x2="1154.5" y2="410.8" stroke="#7a7a7a" stroke-width="1"/><line x1="1150.5" y1="411.0" x2="1158.5" y2="411.0" stroke="#888" stroke-width="0.6"/><line x1="1152.0" y1="412.5" x2="1157.0" y2="412.5" stroke="#999" stroke-width="0.6"/><line x1="1153.5" y1="414.0" x2="1155.5" y2="414.0" stroke="#aaa" stroke-width="0.6"/><line x1="1190.8" y1="352.0" x2="1190.8" y2="410.8" stroke="#7a7a7a" stroke-width="1"/><line x1="1186.8" y1="411.0" x2="1194.8" y2="411.0" stroke="#888" stroke-width="0.6"/><line x1="1188.3" y1="412.5" x2="1193.3" y2="412.5" stroke="#999" stroke-width="0.6"/><line x1="1189.8" y1="414.0" x2="1191.8" y2="414.0" stroke="#aaa" stroke-width="0.6"/><line x1="1158.2" y1="497.0" x2="1158.2" y2="532.0" stroke="#7a7a7a" stroke-width="1"/><line x1="1154.2" y1="532.0" x2="1162.2" y2="532.0" stroke="#888" stroke-width="0.6"/><line x1="1155.7" y1="533.5" x2="1160.7" y2="533.5" stroke="#999" stroke-width="0.6"/><line x1="1157.2" y1="535.0" x2="1159.2" y2="535.0" stroke="#aaa" stroke-width="0.6"/><line x1="696.5" y1="338.0" x2="696.5" y2="350.7" stroke="#7a7a7a" stroke-width="1"/><polyline points="696.5,350.7 699.0,352.0 694.0,354.5 699.0,357.1 694.0,359.6 699.0,362.2 694.0,364.7 696.5,366.0" fill="none" stroke="#7a7a7a" stroke-width="1"/><line x1="696.5" y1="366.0" x2="696.5" y2="378.0" stroke="#7a7a7a" stroke-width="1"/><line x1="692.5" y1="378.0" x2="700.5" y2="378.0" stroke="#888" stroke-width="0.6"/><line x1="694.0" y1="379.5" x2="699.0" y2="379.5" stroke="#999" stroke-width="0.6"/><line x1="695.5" y1="381.0" x2="697.5" y2="381.0" stroke="#aaa" stroke-width="0.6"/></g>
<g><rect x="536.0" y="333.6" width="2.6" height="4.5" fill="#111"/><circle cx="537.3" cy="389.0" r="1.3" fill="#222"/><circle cx="612.8" cy="452.3" r="1.3" fill="#222"/><circle cx="594.3" cy="468.4" r="1.3" fill="#222"/><circle cx="531.5" cy="501.0" r="1.3" fill="#222"/><circle cx="543.3" cy="507.2" r="1.3" fill="#222"/><rect x="550.5" y="561.1" width="2.6" height="4.5" fill="#111"/><circle cx="551.8" cy="616.5" r="1.3" fill="#222"/><circle cx="627.3" cy="679.8" r="1.3" fill="#222"/><circle cx="608.8" cy="695.9" r="1.3" fill="#222"/><circle cx="546.0" cy="728.5" r="1.3" fill="#222"/><circle cx="557.8" cy="734.7" r="1.3" fill="#222"/><rect x="805.0" y="333.0" width="2.6" height="4.5" fill="#111"/><circle cx="806.3" cy="417.7" r="1.3" fill="#222"/><circle cx="806.3" cy="460.4" r="1.3" fill="#222"/><circle cx="1005.4" cy="500.6" r="1.3" fill="#222"/><circle cx="983.0" cy="525.3" r="1.3" fill="#222"/><rect x="1153.2" y="350.1" width="2.6" height="4.5" fill="#111"/><rect x="1189.5" y="350.1" width="2.6" height="4.5" fill="#111"/><rect x="1156.9" y="492.4" width="2.6" height="4.5" fill="#111"/><rect x="695.2" y="333.0" width="2.6" height="4.5" fill="#111"/></g>
<g font-family="Liberation Sans"><text x="537.3" y="331.6" font-size="4.14" fill="#333" text-anchor="middle">ANT203</text><text x="547.0" y="387.0" font-size="3.91" fill="#444" text-anchor="start">R206</text><text x="570.0" y="386.5" font-size="3.91" fill="#444" text-anchor="start">NC</text><text x="521.0" y="407.0" font-size="3.91" fill="#444" text-anchor="start">R207</text><text x="526.0" y="414.0" font-size="3.91" fill="#444" text-anchor="start">0R</text><text x="519.0" y="445.3" font-size="3.79" fill="#444" text-anchor="start">RF3</text><text x="519.0" y="453.7" font-size="3.79" fill="#444" text-anchor="start">RF4</text><text x="519.0" y="461.8" font-size="3.79" fill="#444" text-anchor="start">GND</text><text x="555.5" y="445.3" font-size="3.79" fill="#555" text-anchor="end">RF1</text><text x="555.5" y="453.7" font-size="3.79" fill="#555" text-anchor="end">RF2</text><text x="555.5" y="461.8" font-size="3.79" fill="#555" text-anchor="end">GND</text><text x="555.5" y="469.7" font-size="3.79" fill="#555" text-anchor="end">VDD</text><text x="536.0" y="456.5" font-size="3.79" fill="#666" text-anchor="middle">U201</text><text x="537.3" y="441.0" font-size="3.45" fill="#555" text-anchor="middle">VC</text><text x="531.5" y="474.0" font-size="3.45" fill="#555" text-anchor="middle">C1</text><text x="543.3" y="474.0" font-size="3.45" fill="#555" text-anchor="middle">C2</text><text x="480.0" y="441.0" font-size="3.91" fill="#444" text-anchor="start">C204</text><text x="497.0" y="441.0" font-size="3.91" fill="#444" text-anchor="start">NC</text><text x="470.0" y="449.5" font-size="3.91" fill="#444" text-anchor="start">R203</text><text x="503.0" y="450.0" font-size="3.91" fill="#444" text-anchor="start">NC</text><text x="563.0" y="441.5" font-size="3.91" fill="#444" text-anchor="start">R204</text><text x="589.0" y="441.5" font-size="3.91" fill="#444" text-anchor="start">NC</text><text x="563.0" y="450.0" font-size="3.91" fill="#444" text-anchor="start">R205</text><text x="589.0" y="450.0" font-size="3.91" fill="#444" text-anchor="start">NC</text><text x="597.0" y="483.0" font-size="3.68" fill="#444" text-anchor="start">C205</text><text x="597.0" y="495.0" font-size="3.68" fill="#444" text-anchor="start">1uF</text><text x="432.0" y="503.0" font-size="3.68" fill="#888" text-anchor="start">[1,1]</text><text x="432.0" y="509.0" font-size="3.68" fill="#888" text-anchor="start">[1,2]</text><text x="520.0" y="518.0" font-size="3.68" fill="#444" text-anchor="start">C206</text><text x="533.0" y="518.0" font-size="3.68" fill="#444" text-anchor="start">C207</text><text x="520.0" y="529.5" font-size="3.68" fill="#444" text-anchor="start">33pF</text><text x="533.0" y="529.5" font-size="3.68" fill="#444" text-anchor="start">33pF</text><text x="551.8" y="559.1" font-size="4.14" fill="#333" text-anchor="middle">ANT211</text><text x="561.5" y="614.5" font-size="3.91" fill="#444" text-anchor="start">R211</text><text x="584.5" y="614.0" font-size="3.91" fill="#444" text-anchor="start">NC</text><text x="535.5" y="634.5" font-size="3.91" fill="#444" text-anchor="start">R212</text><text x="540.5" y="641.5" font-size="3.91" fill="#444" text-anchor="start">0R</text><text x="533.5" y="672.8" font-size="3.79" fill="#444" text-anchor="start">RF3</text><text x="533.5" y="681.2" font-size="3.79" fill="#444" text-anchor="start">RF4</text><text x="533.5" y="689.3" font-size="3.79" fill="#444" text-anchor="start">GND</text><text x="570.0" y="672.8" font-size="3.79" fill="#555" text-anchor="end">RF1</text><text x="570.0" y="681.2" font-size="3.79" fill="#555" text-anchor="end">RF2</text><text x="570.0" y="689.3" font-size="3.79" fill="#555" text-anchor="end">GND</text><text x="570.0" y="697.2" font-size="3.79" fill="#555" text-anchor="end">VDD</text><text x="550.5" y="684.0" font-size="3.79" fill="#666" text-anchor="middle">U202</text><text x="551.8" y="668.5" font-size="3.45" fill="#555" text-anchor="middle">VC</text><text x="546.0" y="701.5" font-size="3.45" fill="#555" text-anchor="middle">C1</text><text x="557.8" y="701.5" font-size="3.45" fill="#555" text-anchor="middle">C2</text><text x="494.5" y="668.5" font-size="3.91" fill="#444" text-anchor="start">C204</text><text x="511.5" y="668.5" font-size="3.91" fill="#444" text-anchor="start">NC</text><text x="484.5" y="677.0" font-size="3.91" fill="#444" text-anchor="start">R203</text><text x="517.5" y="677.5" font-size="3.91" fill="#444" text-anchor="start">NC</text><text x="577.5" y="669.0" font-size="3.91" fill="#444" text-anchor="start">R204</text><text x="603.5" y="669.0" font-size="3.91" fill="#444" text-anchor="start">NC</text><text x="577.5" y="677.5" font-size="3.91" fill="#444" text-anchor="start">R205</text><text x="603.5" y="677.5" font-size="3.91" fill="#444" text-anchor="start">NC</text><text x="611.5" y="710.5" font-size="3.68" fill="#444" text-anchor="start">C205</text><text x="611.5" y="722.5" font-size="3.68" fill="#444" text-anchor="start">1uF</text><text x="446.5" y="730.5" font-size="3.68" fill="#888" text-anchor="start">[1,1]</text><text x="446.5" y="736.5" font-size="3.68" fill="#888" text-anchor="start">[1,2]</text><text x="534.5" y="745.5" font-size="3.68" fill="#444" text-anchor="start">C206</text><text x="547.5" y="745.5" font-size="3.68" fill="#444" text-anchor="start">C207</text><text x="534.5" y="757.0" font-size="3.68" fill="#444" text-anchor="start">33pF</text><text x="547.5" y="757.0" font-size="3.68" fill="#444" text-anchor="start">33pF</text><text x="806.3" y="331.0" font-size="4.14" fill="#333" text-anchor="middle">ANT208</text><text x="808.5" y="373.0" font-size="3.68" fill="#444" text-anchor="start">R201</text><text x="808.5" y="395.0" font-size="3.68" fill="#444" text-anchor="start">0R</text><text x="808.5" y="424.0" font-size="3.68" fill="#444" text-anchor="start">R217</text><text x="808.5" y="446.0" font-size="3.68" fill="#444" text-anchor="start">0R</text><text x="808.5" y="476.0" font-size="3.68" fill="#444" text-anchor="start">R218</text><text x="808.5" y="497.0" font-size="3.68" fill="#444" text-anchor="start">0R</text><text x="792.0" y="415.7" font-size="3.68" fill="#444" text-anchor="start">L201</text><text x="770.0" y="415.2" font-size="3.68" fill="#3a3ab8" text-anchor="start">NC</text><text x="792.0" y="458.4" font-size="3.68" fill="#444" text-anchor="start">L202</text><text x="770.0" y="457.9" font-size="3.68" fill="#3a3ab8" text-anchor="start">NC</text><text x="986.0" y="491.0" font-size="3.68" fill="#444" text-anchor="start">GND</text><text x="993.0" y="504.0" font-size="3.68" fill="#444" text-anchor="start">GND</text><text x="986.0" y="514.0" font-size="3.68" fill="#444" text-anchor="start">GND</text><text x="962.0" y="499.0" font-size="3.68" fill="#444" text-anchor="start">CN211</text><text x="985.0" y="508.0" font-size="3.45" fill="#444" text-anchor="start">SW</text><text x="1154.5" y="343.6" font-size="4.14" fill="#333" text-anchor="middle">ANT210</text><text x="1154.5" y="347.1" font-size="2.99" fill="#666" text-anchor="middle">NC_1</text><text x="1190.8" y="343.6" font-size="4.14" fill="#333" text-anchor="middle">ANT204</text><text x="1190.8" y="347.1" font-size="2.99" fill="#666" text-anchor="middle">NC_1</text><text x="1158.2" y="490.4" font-size="4.14" fill="#333" text-anchor="middle">ANT207</text><text x="696.5" y="331.0" font-size="4.14" fill="#333" text-anchor="middle">ANT202</text><text x="680.0" y="355.0" font-size="3.68" fill="#444" text-anchor="start">R115</text><text x="683.0" y="362.0" font-size="3.68" fill="#444" text-anchor="start">0R</text></g>
<g font-family="Liberation Sans"><rect x="583.0" y="385.5" width="14.0" height="6.5" fill="none" stroke="#6060c8" stroke-width=".5" stroke-dasharray="1.2 .9"/><text x="583.5" y="391.0" font-size="6.2" textLength="13.0" lengthAdjust="spacingAndGlyphs" fill="#2c2c9a" font-style="italic">GND</text><rect x="461.0" y="441.0" width="14.0" height="6.0" fill="none" stroke="#6060c8" stroke-width=".5" stroke-dasharray="1.2 .9"/><text x="461.5" y="446.0" font-size="5.7" textLength="13.0" lengthAdjust="spacingAndGlyphs" fill="#2c2c9a" font-style="italic">GND</text><rect x="461.0" y="449.4" width="14.0" height="6.0" fill="none" stroke="#6060c8" stroke-width=".5" stroke-dasharray="1.2 .9"/><text x="461.5" y="454.4" font-size="5.7" textLength="13.0" lengthAdjust="spacingAndGlyphs" fill="#2c2c9a" font-style="italic">GND</text><rect x="461.0" y="457.5" width="14.0" height="6.0" fill="none" stroke="#6060c8" stroke-width=".5" stroke-dasharray="1.2 .9"/><text x="461.5" y="462.5" font-size="5.7" textLength="13.0" lengthAdjust="spacingAndGlyphs" fill="#2c2c9a" font-style="italic">GND</text><rect x="624.0" y="448.5" width="14.0" height="7.0" fill="none" stroke="#6060c8" stroke-width=".5" stroke-dasharray="1.2 .9"/><text x="624.5" y="454.5" font-size="6.6" textLength="13.0" lengthAdjust="spacingAndGlyphs" fill="#2c2c9a" font-style="italic">GND</text><rect x="614.0" y="465.0" width="26.0" height="6.0" fill="none" stroke="#6060c8" stroke-width=".5" stroke-dasharray="1.2 .9"/><text x="614.5" y="470.0" font-size="5.7" textLength="25.0" lengthAdjust="spacingAndGlyphs" fill="#2c2c9a" font-style="italic">VBAT_RF</text><rect x="597.0" y="500.0" width="14.0" height="6.0" fill="none" stroke="#6060c8" stroke-width=".5" stroke-dasharray="1.2 .9"/><text x="597.5" y="505.0" font-size="5.7" textLength="13.0" lengthAdjust="spacingAndGlyphs" fill="#2c2c9a" font-style="italic">GND</text><rect x="442.0" y="498.0" width="33.0" height="6.0" fill="none" stroke="#6060c8" stroke-width=".5" stroke-dasharray="1.2 .9"/><text x="442.5" y="503.0" font-size="5.7" textLength="32.0" lengthAdjust="spacingAndGlyphs" fill="#2c2c9a" font-style="italic">SUB_RF1_CTRL</text><rect x="442.0" y="505.0" width="33.0" height="5.5" fill="none" stroke="#6060c8" stroke-width=".5" stroke-dasharray="1.2 .9"/><text x="442.5" y="509.5" font-size="5.2" textLength="32.0" lengthAdjust="spacingAndGlyphs" fill="#2c2c9a" font-style="italic">SUB_RF2_CTRL</text><rect x="534.0" y="535.0" width="26.0" height="6.0" fill="none" stroke="#6060c8" stroke-width=".5" stroke-dasharray="1.2 .9"/><text x="534.5" y="540.0" font-size="5.7" textLength="25.0" lengthAdjust="spacingAndGlyphs" fill="#2c2c9a" font-style="italic">GND GND</text><rect x="597.5" y="613.0" width="14.0" height="6.5" fill="none" stroke="#6060c8" stroke-width=".5" stroke-dasharray="1.2 .9"/><text x="598.0" y="618.5" font-size="6.2" textLength="13.0" lengthAdjust="spacingAndGlyphs" fill="#2c2c9a" font-style="italic">GND</text><rect x="475.5" y="668.5" width="14.0" height="6.0" fill="none" stroke="#6060c8" stroke-width=".5" stroke-dasharray="1.2 .9"/><text x="476.0" y="673.5" font-size="5.7" textLength="13.0" lengthAdjust="spacingAndGlyphs" fill="#2c2c9a" font-style="italic">GND</text><rect x="475.5" y="676.9" width="14.0" height="6.0" fill="none" stroke="#6060c8" stroke-width=".5" stroke-dasharray="1.2 .9"/><text x="476.0" y="681.9" font-size="5.7" textLength="13.0" lengthAdjust="spacingAndGlyphs" fill="#2c2c9a" font-style="italic">GND</text><rect x="475.5" y="685.0" width="14.0" height="6.0" fill="none" stroke="#6060c8" stroke-width=".5" stroke-dasharray="1.2 .9"/><text x="476.0" y="690.0" font-size="5.7" textLength="13.0" lengthAdjust="spacingAndGlyphs" fill="#2c2c9a" font-style="italic">GND</text><rect x="638.5" y="676.0" width="14.0" height="7.0" fill="none" stroke="#6060c8" stroke-width=".5" stroke-dasharray="1.2 .9"/><text x="639.0" y="682.0" font-size="6.6" textLength="13.0" lengthAdjust="spacingAndGlyphs" fill="#2c2c9a" font-style="italic">GND</text><rect x="628.5" y="692.5" width="26.0" height="6.0" fill="none" stroke="#6060c8" stroke-width=".5" stroke-dasharray="1.2 .9"/><text x="629.0" y="697.5" font-size="5.7" textLength="25.0" lengthAdjust="spacingAndGlyphs" fill="#2c2c9a" font-style="italic">VBAT_RF</text><rect x="611.5" y="727.5" width="14.0" height="6.0" fill="none" stroke="#6060c8" stroke-width=".5" stroke-dasharray="1.2 .9"/><text x="612.0" y="732.5" font-size="5.7" textLength="13.0" lengthAdjust="spacingAndGlyphs" fill="#2c2c9a" font-style="italic">GND</text><rect x="456.5" y="725.5" width="33.0" height="6.0" fill="none" stroke="#6060c8" stroke-width=".5" stroke-dasharray="1.2 .9"/><text x="457.0" y="730.5" font-size="5.7" textLength="32.0" lengthAdjust="spacingAndGlyphs" fill="#2c2c9a" font-style="italic">SUB_RF1_CTRL</text><rect x="456.5" y="732.5" width="33.0" height="5.5" fill="none" stroke="#6060c8" stroke-width=".5" stroke-dasharray="1.2 .9"/><text x="457.0" y="737.0" font-size="5.2" textLength="32.0" lengthAdjust="spacingAndGlyphs" fill="#2c2c9a" font-style="italic">SUB_RF2_CTRL</text><rect x="548.5" y="762.5" width="26.0" height="6.0" fill="none" stroke="#6060c8" stroke-width=".5" stroke-dasharray="1.2 .9"/><text x="549.0" y="767.5" font-size="5.7" textLength="25.0" lengthAdjust="spacingAndGlyphs" fill="#2c2c9a" font-style="italic">GND GND</text><rect x="766.0" y="416.7" width="16.0" height="5.5" fill="none" stroke="#6060c8" stroke-width=".5" stroke-dasharray="1.2 .9"/><text x="766.5" y="421.2" font-size="5.2" textLength="15.0" lengthAdjust="spacingAndGlyphs" fill="#2c2c9a" font-style="italic">GND</text><rect x="766.0" y="459.4" width="16.0" height="5.5" fill="none" stroke="#6060c8" stroke-width=".5" stroke-dasharray="1.2 .9"/><text x="766.5" y="463.9" font-size="5.2" textLength="15.0" lengthAdjust="spacingAndGlyphs" fill="#2c2c9a" font-style="italic">GND</text><rect x="985.0" y="539.0" width="15.0" height="6.0" fill="none" stroke="#6060c8" stroke-width=".5" stroke-dasharray="1.2 .9"/><text x="985.5" y="544.0" font-size="5.7" textLength="14.0" lengthAdjust="spacingAndGlyphs" fill="#2c2c9a" font-style="italic">GND</text><rect x="1157.0" y="403.0" width="14.0" height="6.0" fill="none" stroke="#6060c8" stroke-width=".5" stroke-dasharray="1.2 .9"/><text x="1157.5" y="408.0" font-size="5.7" textLength="13.0" lengthAdjust="spacingAndGlyphs" fill="#2c2c9a" font-style="italic">GND</text><rect x="1193.0" y="404.5" width="14.0" height="6.0" fill="none" stroke="#6060c8" stroke-width=".5" stroke-dasharray="1.2 .9"/><text x="1193.5" y="409.5" font-size="5.7" textLength="13.0" lengthAdjust="spacingAndGlyphs" fill="#2c2c9a" font-style="italic">GND</text><rect x="1162.0" y="520.0" width="14.0" height="6.0" fill="none" stroke="#6060c8" stroke-width=".5" stroke-dasharray="1.2 .9"/><text x="1162.5" y="525.0" font-size="5.7" textLength="13.0" lengthAdjust="spacingAndGlyphs" fill="#2c2c9a" font-style="italic">GND</text><rect x="700.0" y="372.0" width="14.0" height="6.0" fill="none" stroke="#6060c8" stroke-width=".5" stroke-dasharray="1.2 .9"/><text x="700.5" y="377.0" font-size="5.7" textLength="13.0" lengthAdjust="spacingAndGlyphs" fill="#2c2c9a" font-style="italic">GND</text></g>
<g stroke="#6a6a6a" stroke-width="1" fill="none">
<polyline points="747.5,834 747.5,773.5 1360,773.5"/>
<line x1="747.5" y1="802.5" x2="1360" y2="802.5"/>
<line x1="747.5" y1="818.5" x2="1158.5" y2="818.5"/>
<line x1="814.5" y1="802.5" x2="814.5" y2="834"/>
<line x1="883.5" y1="802.5" x2="883.5" y2="834"/>
<line x1="918.5" y1="802.5" x2="918.5" y2="834"/>
<line x1="971.5" y1="773.5" x2="971.5" y2="834"/>
<line x1="1158.5" y1="773.5" x2="1158.5" y2="834"/>
<line x1="1044.5" y1="818.5" x2="1044.5" y2="834"/>
<line x1="1248" y1="802.5" x2="1248" y2="834"/>
</g>
<g font-size="10" fill="#1a1a1a">
<text x="752" y="791.8" textLength="143" lengthAdjust="spacingAndGlyphs">COMPANY: TRANSSION HOLDINGS</text>
<text x="975.6" y="790.7" textLength="32.4" lengthAdjust="spacingAndGlyphs">MODEL:</text>
<text x="1047.5" y="790.7" textLength="22.2" lengthAdjust="spacingAndGlyphs">H653</text>
<text x="1163.3" y="791.7" textLength="62.2" lengthAdjust="spacingAndGlyphs">Modified Date:</text>
<text x="1243.7" y="790.7" textLength="45.4" lengthAdjust="spacingAndGlyphs">2019/10/9</text>
<text x="752" y="813.9" textLength="30.2" lengthAdjust="spacingAndGlyphs">DRAWN</text>
<text x="833.5" y="813.5" textLength="31" lengthAdjust="spacingAndGlyphs">ZY/DLA</text>
<text x="886.5" y="814.5" textLength="28.7" lengthAdjust="spacingAndGlyphs">DATED</text>
<text x="921.2" y="813.5" textLength="42.4" lengthAdjust="spacingAndGlyphs">20180613</text>
<text x="975.6" y="814.9" textLength="27.2" lengthAdjust="spacingAndGlyphs">TITLE:</text>
<text x="1020.2" y="814.9" textLength="41.6" lengthAdjust="spacingAndGlyphs">2_SUB_RF</text>
<text x="752" y="830.5" textLength="40.1" lengthAdjust="spacingAndGlyphs">CHECKED</text>
<text x="822.5" y="830.5" textLength="52.6" lengthAdjust="spacingAndGlyphs">&lt;CHECKED&gt;</text>
<text x="886.5" y="830.5" textLength="28.7" lengthAdjust="spacingAndGlyphs">DATED</text>
<text x="935.6" y="830.5" textLength="5.5" lengthAdjust="spacingAndGlyphs">&lt;</text>
<text x="947.5" y="830.5" textLength="5.5" lengthAdjust="spacingAndGlyphs">&gt;</text>
<text x="975.6" y="830.5" textLength="61.3" lengthAdjust="spacingAndGlyphs">Confidentiality</text>
<text x="1065.6" y="830.5" textLength="61.3" lengthAdjust="spacingAndGlyphs">CONFIDENTIAL</text>
<text x="1163.3" y="822" textLength="40.9" lengthAdjust="spacingAndGlyphs">VERSION:</text>
<text x="1212.2" y="822" textLength="18.8" lengthAdjust="spacingAndGlyphs">V1.0</text>
<text x="1249.8" y="822.8" textLength="28.9" lengthAdjust="spacingAndGlyphs">SHEET:</text>
<text x="1288" y="822" textLength="5.5" lengthAdjust="spacingAndGlyphs">2</text>
<text x="1301" y="823.5" textLength="11" lengthAdjust="spacingAndGlyphs">OF</text>
<text x="1330.8" y="822" textLength="5.5" lengthAdjust="spacingAndGlyphs">2</text>
</g>
</svg>
<div class="a" id="vbelow"></div>
<div class="a" id="status"></div>
<div class="a mono" style="left:0px;top:842px;color:#fff;line-height:16px">Version:1.0.0.52</div>
<div class="a mono" style="left:1345px;top:842px;color:#fff;line-height:16px">Current [H655_Sub_SCH_1_V1.1]</div>
<div class="a" id="bottomedge"></div>
<div class="a" id="bright"></div>
</body></html>
